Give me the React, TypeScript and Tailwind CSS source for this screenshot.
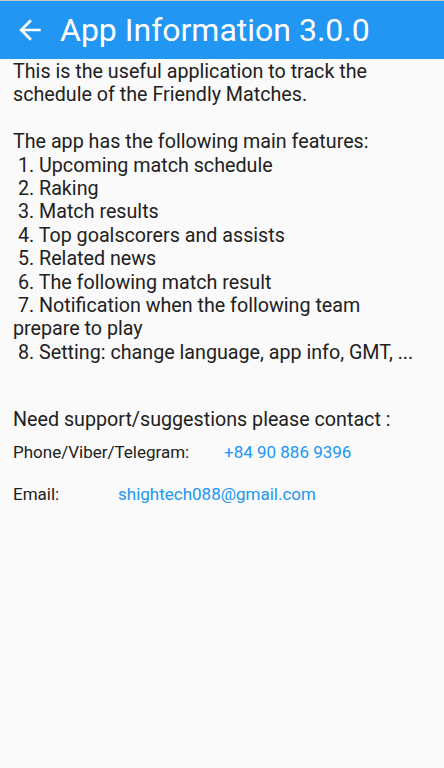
import React from 'react';

const ArrowBack = () => (
  <svg width="32" height="32" viewBox="0 0 24 24" fill="white">
    <path d="M20 11H7.83l5.59-5.59L12 4l-8 8 8 8 1.41-1.41L7.83 13H20v-2z" />
  </svg>
);

const features = [
  ' 1. Upcoming match schedule',
  ' 2. Raking',
  ' 3. Match results',
  ' 4. Top goalscorers and assists',
  ' 5. Related news',
  ' 6. The following match result',
  ' 7. Notification when the following team prepare to play',
  ' 8. Setting: change language, app info, GMT, ...',
];

export default function App() {
  return (
    <div
      className="min-h-[768px] w-[444px] bg-[#fafafa] text-[#212121]"
      style={{ fontFamily: 'Roboto, "Noto Sans", sans-serif' }}
    >
      <div className="h-[59px] bg-[#2196f3] border-t border-[#c8c8c8] flex items-center">
        <div className="w-[60px] pl-[14px] flex items-center">
          <ArrowBack />
        </div>
        <h1 className="text-white text-[32px] leading-none">App Information 3.0.0</h1>
      </div>

      <div className="px-[13px] pt-[1px]">
        <p className="text-[19.7px] leading-[23.4px] whitespace-pre-wrap">
          {'This is the useful application to track the schedule of the Friendly Matches.\n\nThe app has the following main features:\n' +
            features.join('\n') +
            '\n\n'}
        </p>

        <p className="text-[19.7px] leading-[23.4px] mt-[20px]">Need support/suggestions please contact :</p>

        <div className="mt-[11px] flex text-[17px] leading-[21px]">
          <span className="w-[211px]">Phone/Viber/Telegram:</span>
          <span className="text-[#2196f3]">+84 90 886 9396</span>
        </div>

        <div className="mt-[21px] flex text-[17px] leading-[21px]">
          <span className="w-[105px]">Email:</span>
          <span className="text-[#2196f3]">shightech088@gmail.com</span>
        </div>
      </div>
    </div>
  );
}
